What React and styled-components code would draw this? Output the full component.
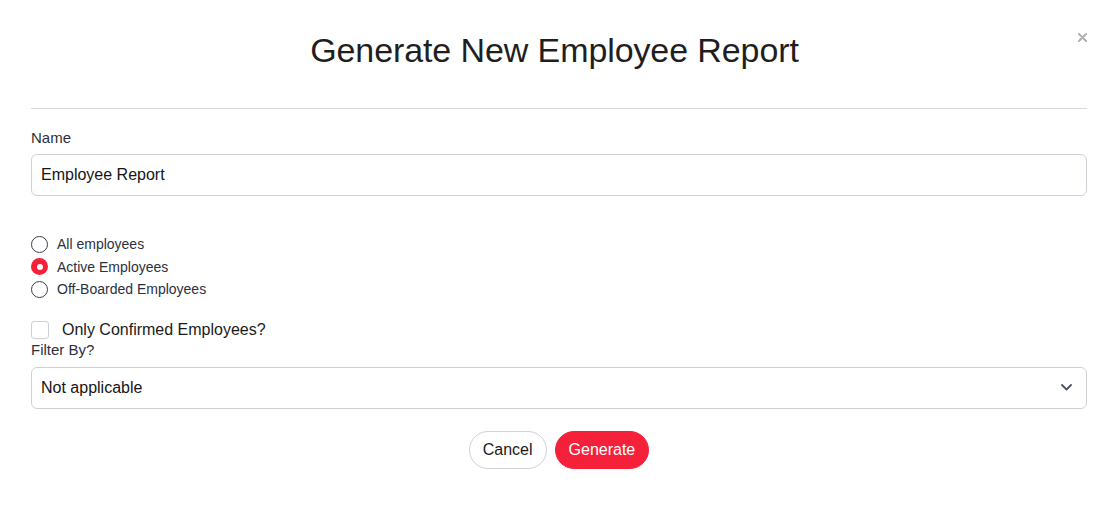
import React, { useState } from "react";
import styled, { createGlobalStyle } from "styled-components";

const GlobalStyle = createGlobalStyle`
  html, body {
    margin: 0;
    padding: 0;
    background: #ffffff;
    font-family: "Liberation Sans", Arial, Helvetica, sans-serif;
  }
  * { box-sizing: border-box; }
`;

const Modal = styled.div`
  position: relative;
  width: 1116px;
  min-height: 527px;
  padding: 0 29px 0 31px;
  background: #fff;
`;

const Header = styled.div`
  padding: 31px 9px 38px 0;
  border-bottom: 1px solid #d9d9d9;
  text-align: center;
`;

const Title = styled.h1`
  margin: 0;
  font-size: 34px;
  font-weight: 400;
  line-height: 39px;
  color: #1f1f1f;
  letter-spacing: -0.1px;
`;

const CloseButton = styled.button`
  position: absolute;
  top: 31px;
  right: 28px;
  width: 12px;
  height: 12px;
  padding: 0;
  border: none;
  background: transparent;
  cursor: pointer;
  display: flex;
  align-items: center;
  justify-content: center;
`;

const Form = styled.form`
  padding-top: 18px;
  display: flex;
  flex-direction: column;
`;

const Label = styled.label`
  font-size: 15px;
  line-height: 22px;
  color: #2b3140;
`;

const TextInput = styled.input`
  margin-top: 5px;
  width: 100%;
  height: 42px;
  padding: 0 9px;
  border: 1px solid #cdd1d6;
  border-radius: 6px;
  font-family: inherit;
  font-size: 16px;
  color: #151515;
  outline: none;
`;

const RadioGroup = styled.div`
  margin-top: 36.75px;
  display: flex;
  flex-direction: column;
`;

const RadioRow = styled.label`
  height: 22.6px;
  display: flex;
  align-items: center;
  gap: 9px;
  font-size: 14px;
  color: #2b3140;
  cursor: pointer;
`;

const RadioDot = styled.span`
  width: 17px;
  height: 17px;
  border-radius: 50%;
  flex-shrink: 0;
  display: flex;
  align-items: center;
  justify-content: center;
  border: ${(p) => (p.checked ? "none" : "1px solid #3a3f48")};
  background: ${(p) => (p.checked ? "#f5213a" : "#fff")};

  &::after {
    content: "";
    display: ${(p) => (p.checked ? "block" : "none")};
    width: 6px;
    height: 6px;
    border-radius: 50%;
    background: #fff;
  }
`;

const CheckRow = styled.label`
  margin-top: 20px;
  height: 18px;
  display: flex;
  align-items: center;
  gap: 13px;
  font-size: 16px;
  color: #1a1a1a;
  cursor: pointer;
`;

const CheckBox = styled.span`
  width: 18px;
  height: 18px;
  border: 1px solid #ccd0d5;
  border-radius: 3px;
  background: ${(p) => (p.checked ? "#f5213a" : "#fff")};
  flex-shrink: 0;
`;

const SelectBox = styled.div`
  margin-top: 6px;
  height: 42px;
  padding: 0 14px 0 9px;
  border: 1px solid #cdd1d6;
  border-radius: 6px;
  display: flex;
  align-items: center;
  justify-content: space-between;
  font-size: 16px;
  color: #151515;
`;

const Actions = styled.div`
  margin-top: 22px;
  display: flex;
  justify-content: center;
  gap: 8px;
`;

const Button = styled.button`
  height: 38px;
  padding: 0 13px;
  border-radius: 19px;
  font-family: inherit;
  font-size: 16px;
  cursor: pointer;
  border: 1px solid ${(p) => (p.$primary ? "#f5213a" : "#cfd2d6")};
  background: ${(p) => (p.$primary ? "#f5213a" : "#fff")};
  color: ${(p) => (p.$primary ? "#fff" : "#1a1a1a")};
`;

const options = ["All employees", "Active Employees", "Off-Boarded Employees"];

export default function App() {
  const [choice, setChoice] = useState(1);
  const [confirmed, setConfirmed] = useState(false);

  return (
    <Modal>
      <GlobalStyle />
      <Header>
        <Title>Generate New Employee Report</Title>
      </Header>
      <CloseButton aria-label="Close">
        <svg width="9" height="9" viewBox="0 0 9 9">
          <path d="M1 1L8 8M8 1L1 8" stroke="#b0b0b0" strokeWidth="2" strokeLinecap="round" />
        </svg>
      </CloseButton>

      <Form onSubmit={(e) => e.preventDefault()}>
        <Label>Name</Label>
        <TextInput defaultValue="Employee Report" />

        <RadioGroup>
          {options.map((opt, i) => (
            <RadioRow key={opt} onClick={() => setChoice(i)}>
              <RadioDot checked={choice === i} />
              {opt}
            </RadioRow>
          ))}
        </RadioGroup>

        <CheckRow onClick={() => setConfirmed((c) => !c)}>
          <CheckBox checked={confirmed} />
          Only Confirmed Employees?
        </CheckRow>

        <Label>Filter By?</Label>
        <SelectBox>
          <span>Not applicable</span>
          <svg width="11" height="7" viewBox="0 0 11 7">
            <path d="M1 1L5.5 5.5L10 1" fill="none" stroke="#4a5160" strokeWidth="1.8" strokeLinecap="round" strokeLinejoin="round" />
          </svg>
        </SelectBox>

        <Actions>
          <Button type="button">Cancel</Button>
          <Button type="submit" $primary>Generate</Button>
        </Actions>
      </Form>
    </Modal>
  );
}
